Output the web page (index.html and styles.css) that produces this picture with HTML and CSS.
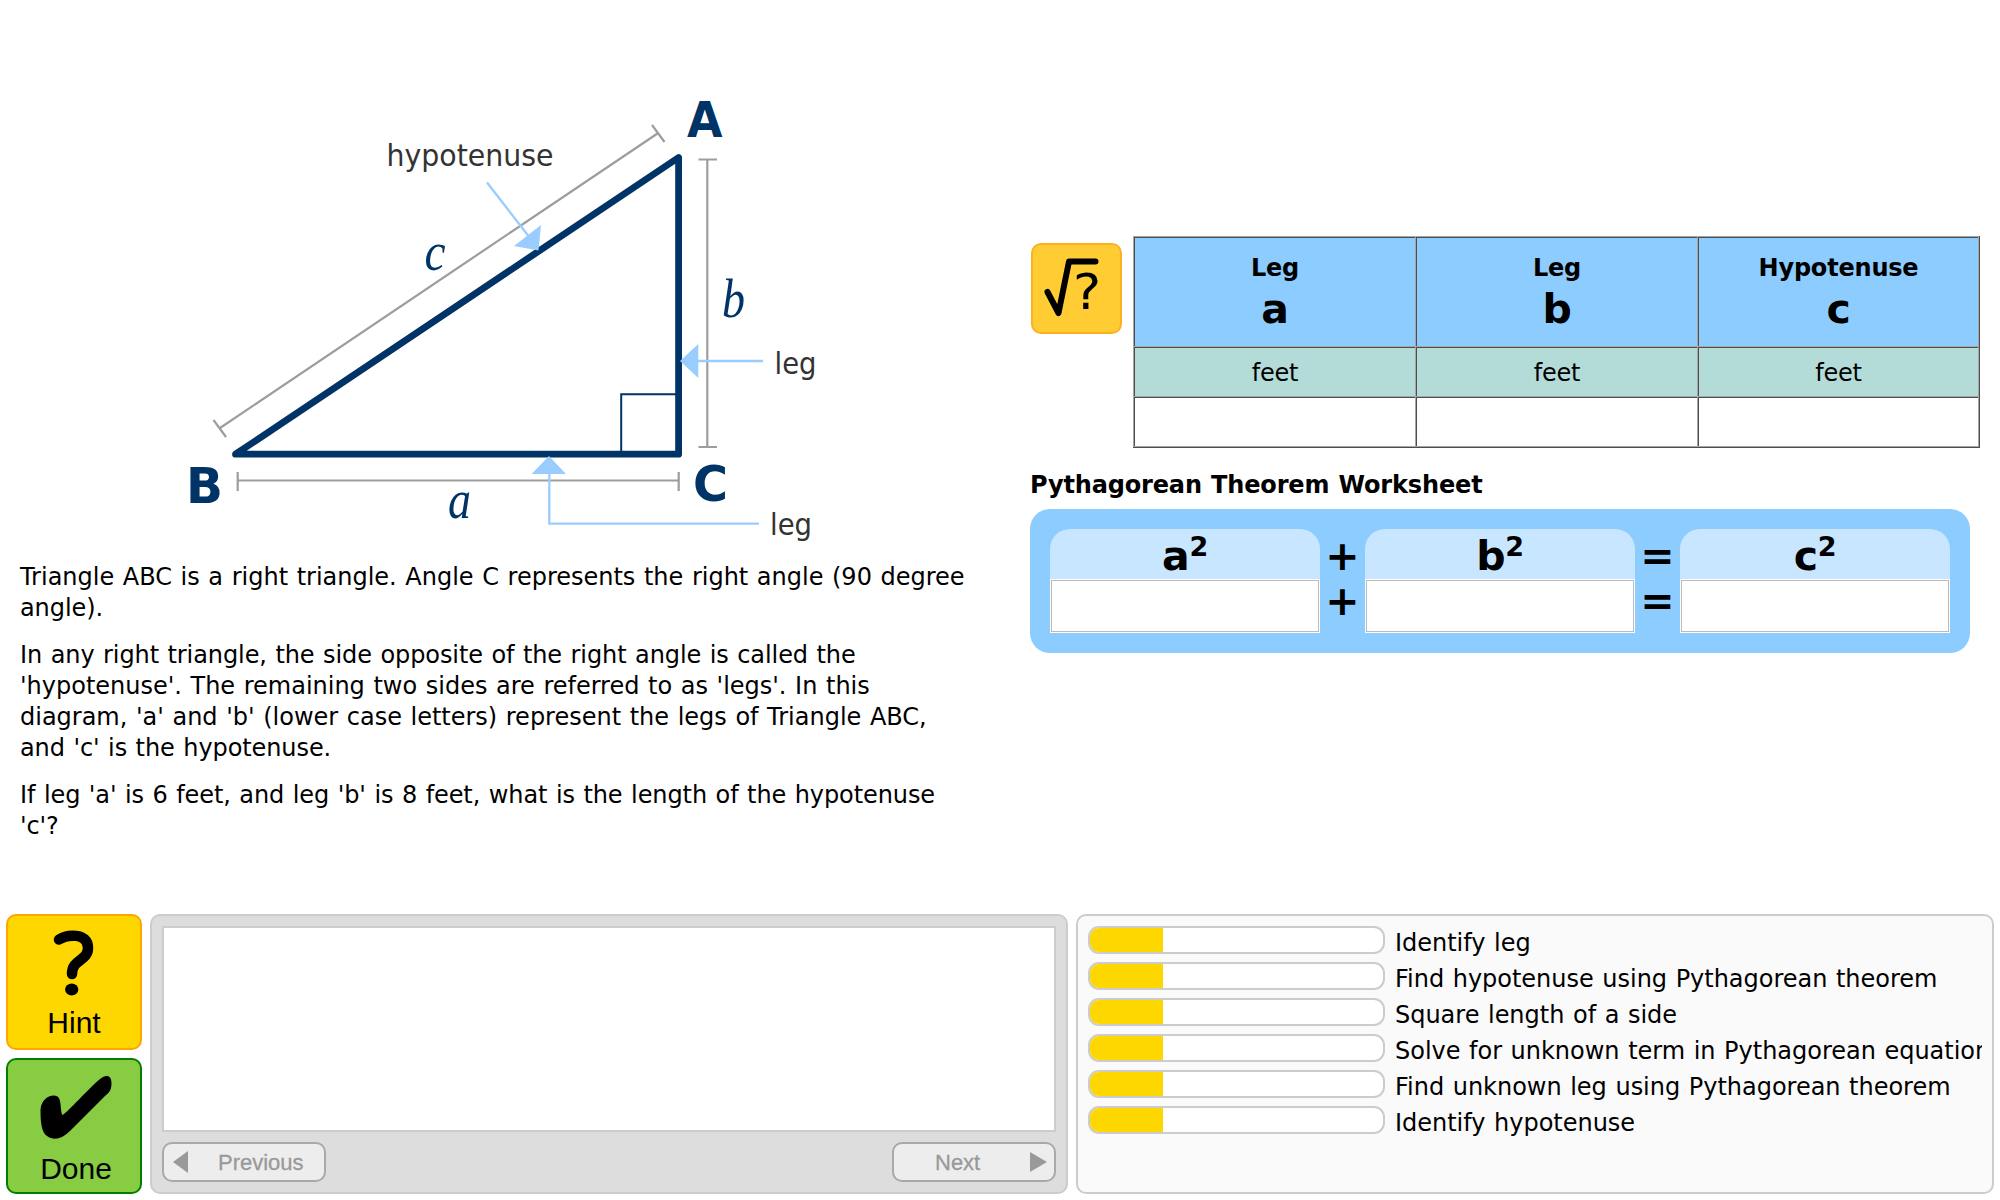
FILE: index.html
```html
<!DOCTYPE html>
<html lang="en">
<head>
<meta charset="utf-8">
<title>Pythagorean Theorem Tutor</title>
<link rel="stylesheet" href="styles.css">
</head>
<body>
<main class="problem">
  <section class="lesson">
    <svg class="diagram" viewBox="0 0 1000 562" width="1000" height="562">
      <g class="measure">
        <path d="M220 428L657.500 133.500M213.500 420L226 437M652 125L664.500 142"/>
        <path d="M707.300 159.500V447M698.500 159.500H717M698.500 447H717"/>
        <path d="M237.700 480.500H678.700M237.700 472V491M678.700 472V491"/>
      </g>
      <path class="corner" d="M621.200 454V394.300H678"/>
      <path class="triangle" d="M678.600 157.500V454.200H235.500Z"/>
      <g class="pointer">
        <path d="M487 182.500L530 238M698 361H763M549.300 473V523.700H759"/>
        <path class="head" d="M541 225L514 246L538.500 250.500ZM680 361L698.300 344V378ZM549 456L531.500 474H566Z"/>
      </g>
      <g class="label">
        <text x="386.500" y="165.500" textLength="167" lengthAdjust="spacingAndGlyphs">hypotenuse</text>
        <text x="774.500" y="374" textLength="42" lengthAdjust="spacingAndGlyphs">leg</text>
        <text x="770" y="534.500" textLength="42" lengthAdjust="spacingAndGlyphs">leg</text>
      </g>
      <g class="vertex">
        <text x="687" y="136.700" textLength="35.500" lengthAdjust="spacingAndGlyphs">A</text>
        <text x="186" y="503.300" textLength="37" lengthAdjust="spacingAndGlyphs">B</text>
        <text x="693" y="501" textLength="35" lengthAdjust="spacingAndGlyphs">C</text>
      </g>
      <g class="side">
        <text x="424.500" y="269.500" textLength="21" lengthAdjust="spacingAndGlyphs">c</text>
        <text x="722" y="317" textLength="23" lengthAdjust="spacingAndGlyphs">b</text>
        <text x="448" y="518" textLength="23" lengthAdjust="spacingAndGlyphs">a</text>
      </g>
    </svg>
    <div class="story">
      <p><span class="loose">Triangle ABC is a right triangle. Angle C represents the right angle (90 degree</span><br>angle).</p>
      <p>In any right triangle, the side opposite of the right angle is called the<br><span class="loose">'hypotenuse'. The remaining two sides are referred to as 'legs'. In this<br>diagram, 'a' and 'b' (lower case letters) represent the legs of Triangle ABC,</span><br>and 'c' is the hypotenuse.</p>
      <p>If leg 'a' is 6 feet, and leg 'b' is 8 feet, what is the length of the hypotenuse<br>'c'?</p>
    </div>
  </section>
  <section class="work">
    <div class="given">
      <svg class="solver" viewBox="0 0 92 92" width="92" height="92">
        <rect x="2" y="1" width="89" height="89" rx="9"/>
        <path d="M17.500 49L28.500 70L39 18.500H65.500"/>
        <text x="43" y="66" textLength="28" lengthAdjust="spacingAndGlyphs">?</text>
      </svg>
      <div class="grid">
        <div class="cell head"><span>Leg</span><b>a</b></div>
        <div class="cell head"><span>Leg</span><b>b</b></div>
        <div class="cell head"><span>Hypotenuse</span><b>c</b></div>
        <div class="cell unit">feet</div>
        <div class="cell unit">feet</div>
        <div class="cell unit">feet</div>
        <div class="cell"></div>
        <div class="cell"></div>
        <div class="cell"></div>
      </div>
    </div>
    <h2 class="title">Pythagorean Theorem Worksheet</h2>
    <div class="sheet">
      <div class="term"><div class="name">a<sup>2</sup></div><div class="entry"></div></div>
      <div class="ops"><span>+</span><span>+</span></div>
      <div class="term"><div class="name">b<sup>2</sup></div><div class="entry"></div></div>
      <div class="ops"><span>=</span><span>=</span></div>
      <div class="term"><div class="name">c<sup>2</sup></div><div class="entry"></div></div>
    </div>
  </section>
</main>
<footer class="tools">
  <div class="actions">
    <div class="action hint">
      <svg viewBox="0 0 132 96" width="132" height="96">
        <path class="hook" d="M51 23.500C58.500 18.500 80 16 80 32C80 45 64 43 64 58"/>
        <ellipse cx="63.700" cy="73.500" rx="6.600" ry="6"/>
      </svg>
      <span>Hint</span>
    </div>
    <div class="action done">
      <svg viewBox="0 0 132 98" width="132" height="98">
        <path d="M32.500 50C33 41 39 35.500 46 35.500C55 35.500 51.500 50 54.500 55C60 52 80 29 92 19C98 14 103.500 15 103.500 23C103.500 32 100 33 95 38L62 71C54 79 46 81 39 76C33 72 32.500 60 32.500 50Z"/>
      </svg>
      <span>Done</span>
    </div>
  </div>
  <div class="hints">
    <div class="message"></div>
    <div class="nav">
      <div class="btn"><svg viewBox="0 0 15 22" width="15" height="22"><path d="M0 11L15 0V22Z"/></svg><span class="prev">Previous</span></div>
      <div class="btn end"><span class="next">Next</span><svg viewBox="0 0 17 20" width="17" height="20"><path d="M17 10L0 0V20Z"/></svg></div>
    </div>
  </div>
  <div class="skills">
    <div class="skill"><div class="bar"><i></i></div><span>Identify leg</span></div>
    <div class="skill"><div class="bar"><i></i></div><span>Find hypotenuse using Pythagorean theorem</span></div>
    <div class="skill"><div class="bar"><i></i></div><span>Square length of a side</span></div>
    <div class="skill"><div class="bar"><i></i></div><span>Solve for unknown term in Pythagorean equation</span></div>
    <div class="skill"><div class="bar"><i></i></div><span>Find unknown leg using Pythagorean theorem</span></div>
    <div class="skill"><div class="bar"><i></i></div><span>Identify hypotenuse</span></div>
  </div>
</footer>
</body>
</html>
```
FILE: styles.css
```css
* { box-sizing: border-box; }
body {
  margin: 0;
  width: 2000px;
  height: 1200px;
  overflow: hidden;
  display: flex;
  flex-direction: column;
  background: #fff;
  color: #000;
  font: 24px/31px Verdana, "DejaVu Sans", sans-serif;
  letter-spacing: -0.2px;
  word-spacing: 1px;
}
svg { display: block; flex: none; }

.problem { display: flex; height: 914px; }
.lesson { width: 1000px; }
.story { padding-left: 20px; white-space: nowrap; letter-spacing: -0.09px; }
.story p { margin: 0 0 16px; }
.loose { letter-spacing: -0.01px; }

.diagram { letter-spacing: 0; }
.measure { fill: none; stroke: #9d9d9d; stroke-width: 2.2; }
.corner { fill: none; stroke: #003366; stroke-width: 2; }
.triangle { fill: none; stroke: #003366; stroke-width: 6.8; stroke-linejoin: round; }
.pointer { fill: none; stroke: #99ccff; stroke-width: 2.3; }
.pointer .head { fill: #99ccff; stroke: none; }
.label { font-size: 31px; fill: #333; }
.vertex { font-size: 49px; font-weight: bold; fill: #003366; }
.side { font: italic 54px "Liberation Serif", serif; fill: #003366; }

.work { padding: 236px 0 0 30px; }
.given { display: flex; align-items: flex-start; gap: 11px; }
.solver { margin-top: 7px; }
.solver rect { fill: #ffcc33; stroke: #fbb120; stroke-width: 2; }
.solver path { fill: none; stroke: #000; stroke-width: 6; stroke-linecap: round; stroke-linejoin: round; }
.solver text { font-size: 49px; }
.grid {
  display: grid;
  grid-template-columns: 282px 282px 281px;
  grid-template-rows: 110px 50px 50px;
  padding: 0 1px 1px 0;
  background: #a6a6a6;
  border: solid #4d4d4d;
  border-width: 0 1px 1px 0;
}
.cell {
  display: flex;
  flex-direction: column;
  align-items: center;
  justify-content: center;
  padding: 5px 0 0 2px;
  background: #fff;
  box-shadow: inset 1px 1px #a6a6a6, inset 2px 2px #4d4d4d;
}
.cell.head { background: #8cccff; font-weight: bold; line-height: 31px; }
.head b { font-size: 41px; line-height: 50px; }
.unit { background: #b3dbd8; }
.title { margin: 22px 0 8px; font-size: 24px; line-height: 31px; letter-spacing: -0.15px; }
.sheet {
  display: flex;
  width: 940px;
  height: 144px;
  padding: 20px;
  border-radius: 20px;
  background: #8cccff;
  font-size: 41px;
  font-weight: bold;
}
.term { width: 270px; }
.name {
  height: 50px;
  border-radius: 20px 20px 0 0;
  background: #c8e6ff;
  text-align: center;
  line-height: 54px;
}
.name sup { font-size: 27px; line-height: 0; vertical-align: 14px; }
.entry { height: 54px; background: #fff; border: 1px solid #fff; outline: 1px solid #bbb; outline-offset: -2px; }
.ops { width: 45px; display: flex; flex-direction: column; align-items: center; padding-top: 5px; letter-spacing: 0; }
.ops span { line-height: 45px; }

.tools { display: flex; gap: 8px; height: 280px; padding-left: 6px; }
.actions { display: flex; flex-direction: column; gap: 8px; width: 136px; }
.action {
  height: 136px;
  border: 2px solid;
  border-radius: 10px;
  text-align: center;
  font: 30px/34px "Liberation Sans", sans-serif;
  letter-spacing: 0;
}
.action span { display: block; }
.hint { background: #ffd700; border-color: #ffa500; }
.hint svg { margin-bottom: -6px; }
.hook { fill: none; stroke: #000; stroke-width: 10.5; stroke-linecap: round; }
.done { background: #88cc44; border-color: #008000; }
.done svg { margin-bottom: -6px; }
.done span { padding-left: 4px; }

.hints { width: 918px; padding: 10px; border: 2px solid #ccc; border-radius: 10px; background: #ddd; }
.message { height: 206px; background: #fff; border: 2px solid #ccc; }
.nav { display: flex; justify-content: space-between; padding-top: 10px; }
.btn {
  display: flex;
  align-items: center;
  width: 164px;
  height: 40px;
  padding-left: 9px;
  border: 2px solid #a9a9a9;
  border-radius: 10px;
  background: #ededed;
  color: #999;
  fill: #999;
  font: 22px/38px "Liberation Sans", sans-serif;
  letter-spacing: 0;
  -webkit-text-stroke: 0.3px #999;
}
.btn span { padding-top: 1px; }
.prev { margin-left: 30px; }
.btn.end { justify-content: space-between; padding: 0 7px 0 41px; }

.skills {
  display: flex;
  flex-direction: column;
  width: 918px;
  padding: 10px;
  border: 2px solid #ccc;
  border-radius: 10px;
  background: #fafafa;
  letter-spacing: -0.02px;
}
.skill { display: flex; gap: 10px; height: 36px; white-space: nowrap; overflow: hidden; }
.bar { flex: none; width: 297px; height: 28px; border: 2px solid #ccc; border-radius: 11px; background: #fff; overflow: hidden; }
.bar i { display: block; width: 25%; height: 100%; background: #ffd700; }
.skill span { line-height: 34px; }
```
